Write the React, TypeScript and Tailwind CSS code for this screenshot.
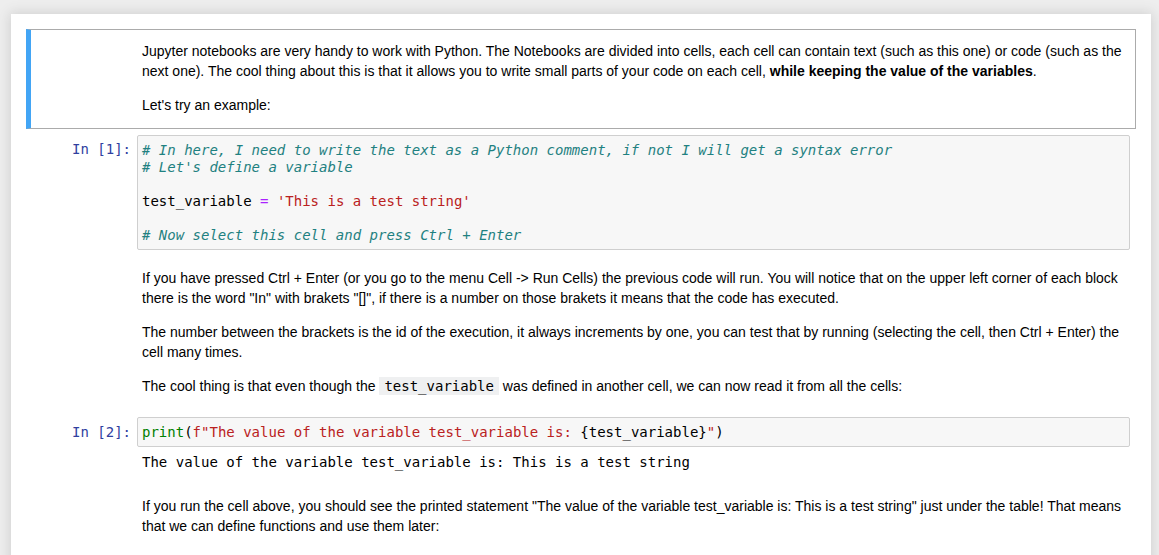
import React from "react";

const sans = { fontFamily: '"Liberation Sans", Arial, sans-serif' };
const mono = { fontFamily: '"DejaVu Sans Mono", monospace' };

function Prompt({ n, top }: { n: number; top: string }) {
  return (
    <div
      className={`w-[106px] shrink-0 pr-[6px] text-right text-[14px] leading-[17px] text-[#303F9F] whitespace-pre ${top}`}
      style={mono}
    >
      {`In [${n}]:`}
    </div>
  );
}

const C = ({ children }: { children: React.ReactNode }) => (
  <span className="italic text-[#1f8181]">{children}</span>
);
const S = ({ children }: { children: React.ReactNode }) => (
  <span className="text-[#BA2121]">{children}</span>
);

export default function App() {
  return (
    <div className="h-[555px] overflow-hidden bg-[#eeeeee] pt-[14px]" style={sans}>
      <div className="ml-[11px] h-[600px] w-[1140px] bg-white px-[15px] pt-[15px] shadow-[0_0_12px_1px_rgba(87,87,87,0.2)]">
        {/* Markdown cell (selected) */}
        <div className="flex border border-[#ababab] border-l-[5px] border-l-[#42A5F5] pr-[5px]">
          <div className="w-[106px] shrink-0" />
          <div className="flex-1 pl-[5px] pr-[7px] pt-[11px] pb-[13px] text-[14px] leading-[20px] text-black">
            <p className="mb-[14px]">
              Jupyter notebooks are very handy to work with Python. The Notebooks are divided into cells, each cell can
              contain text (such as this one) or code (such as the next one). The cool thing about this is that it allows
              you to write small parts of your code on each cell, <b>while keeping the value of the variables</b>.
            </p>
            <p>Let's try an example:</p>
          </div>
        </div>

        {/* Code cell 1 */}
        <div className="flex border border-transparent border-l-[5px] pr-[5px] pt-[5px]">
          <Prompt n={1} top="pt-[6px]" />
          <div
            className="flex-1 rounded-[2px] border border-[#cfcfcf] bg-[#f7f7f7] px-[4px] pt-[6px] pb-[5px] text-[14px] leading-[17px] text-black whitespace-pre"
            style={mono}
          >
            <div>
              <C># In here, I need to write the text as a Python comment, if not I will get a syntax error</C>
            </div>
            <div>
              <C># Let's define a variable</C>
            </div>
            <div>{"\u00a0"}</div>
            <div>
              test_variable <span className="text-[#AA22FF]">=</span> <S>'This is a test string'</S>
            </div>
            <div>{"\u00a0"}</div>
            <div>
              <C># Now select this cell and press Ctrl + Enter</C>
            </div>
          </div>
        </div>

        {/* Markdown cell 2 */}
        <div className="flex border border-transparent border-l-[5px] pr-[5px]">
          <div className="w-[106px] shrink-0" />
          <div className="flex-1 pl-[5px] pr-[7px] pt-[16px] text-[14px] leading-[20px] text-black">
            <p className="mb-[14px]">
              If you have pressed Ctrl + Enter (or you go to the menu Cell -&gt; Run Cells) the previous code will run.
              You will notice that on the upper left corner of each block there is the word "In" with brakets "[]", if
              there is a number on those brakets it means that the code has executed.
            </p>
            <p className="mb-[14px]">
              The number between the brackets is the id of the execution, it always increments by one, you can test that
              by running (selecting the cell, then Ctrl + Enter) the cell many times.
            </p>
            <p>
              The cool thing is that even though the{" "}
              <code className="bg-[#eff0f1] px-[5px] py-[1px] text-[14px] text-black" style={mono}>
                test_variable
              </code>{" "}
              was defined in another cell, we can now read it from all the cells:
            </p>
          </div>
        </div>

        {/* Code cell 2 */}
        <div className="mt-[19px] flex border border-transparent border-l-[5px] pr-[5px]">
          <Prompt n={2} top="pt-[7px]" />
          <div
            className="flex-1 rounded-[2px] border border-[#cfcfcf] bg-[#f7f7f7] px-[4px] pt-[6px] pb-[5px] text-[14px] leading-[17px] text-black whitespace-pre"
            style={mono}
          >
            <span className="text-[#008000]">print</span>(<S>f"The value of the variable test_variable is: </S>
            {"{test_variable}"}
            <S>"</S>)
          </div>
        </div>

        {/* Output */}
        <div className="flex border border-transparent border-l-[5px] pr-[5px]">
          <div className="w-[106px] shrink-0" />
          <div
            className="flex-1 px-[5px] pt-[5px] text-[14px] leading-[17px] text-black whitespace-pre"
            style={mono}
          >
            The value of the variable test_variable is: This is a test string
          </div>
        </div>

        {/* Markdown cell 3 */}
        <div className="flex border border-transparent border-l-[5px] pr-[5px]">
          <div className="w-[106px] shrink-0" />
          <div className="flex-1 pl-[5px] pr-[7px] pt-[23px] text-[14px] leading-[20px] text-black">
            <p>
              If you run the cell above, you should see the printed statement "The value of the variable test_variable
              is: This is a test string" just under the table! That means that we can define functions and use them
              later:
            </p>
          </div>
        </div>
      </div>
    </div>
  );
}
